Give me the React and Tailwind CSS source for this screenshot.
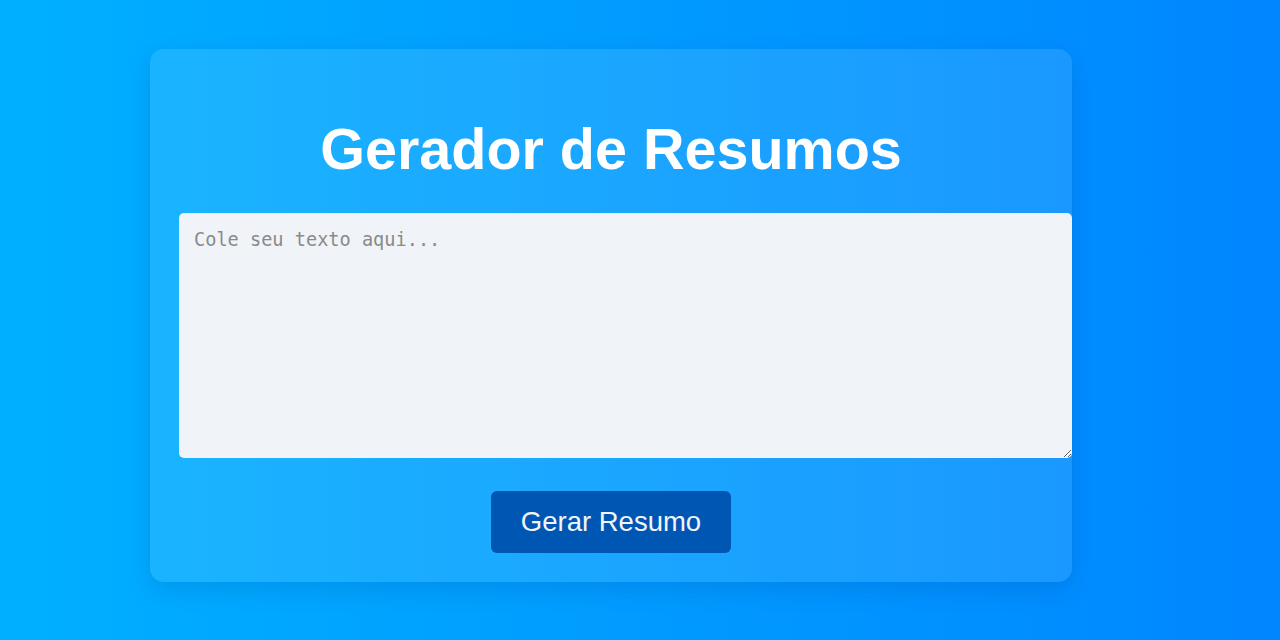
const App = () => {
  return (
    <div className="min-h-screen w-full bg-gradient-to-r from-[#00b0ff] to-[#0086ff] pt-[49px] pl-[150px] font-['Liberation_Sans',Arial,sans-serif]">
      <div className="w-[922px] rounded-[14px] bg-white/10 px-[29px] pb-[29px] pt-[68px] shadow-[0_8px_24px_rgba(0,40,120,0.15)]">
        <h1 className="text-center text-[57.5px] font-bold leading-[64px] text-white">
          Gerador de Resumos
        </h1>

        <textarea
          placeholder="Cole seu texto aqui..."
          className="mt-[32px] block h-[245px] w-[893px] rounded-[5px] bg-[#f0f3f7] p-[15px] font-['DejaVu_Sans_Mono',monospace] text-[18.6px] leading-[24px] text-gray-800 outline-none placeholder:text-[#8a8a8a]"
        />

        <div className="mt-[33px] flex justify-center">
          <button className="h-[62px] w-[240px] rounded-[6px] bg-[#0056b3] text-[27.5px] text-[#f2f4f8]">
            Gerar Resumo
          </button>
        </div>
      </div>
    </div>
  );
};

export default App;
